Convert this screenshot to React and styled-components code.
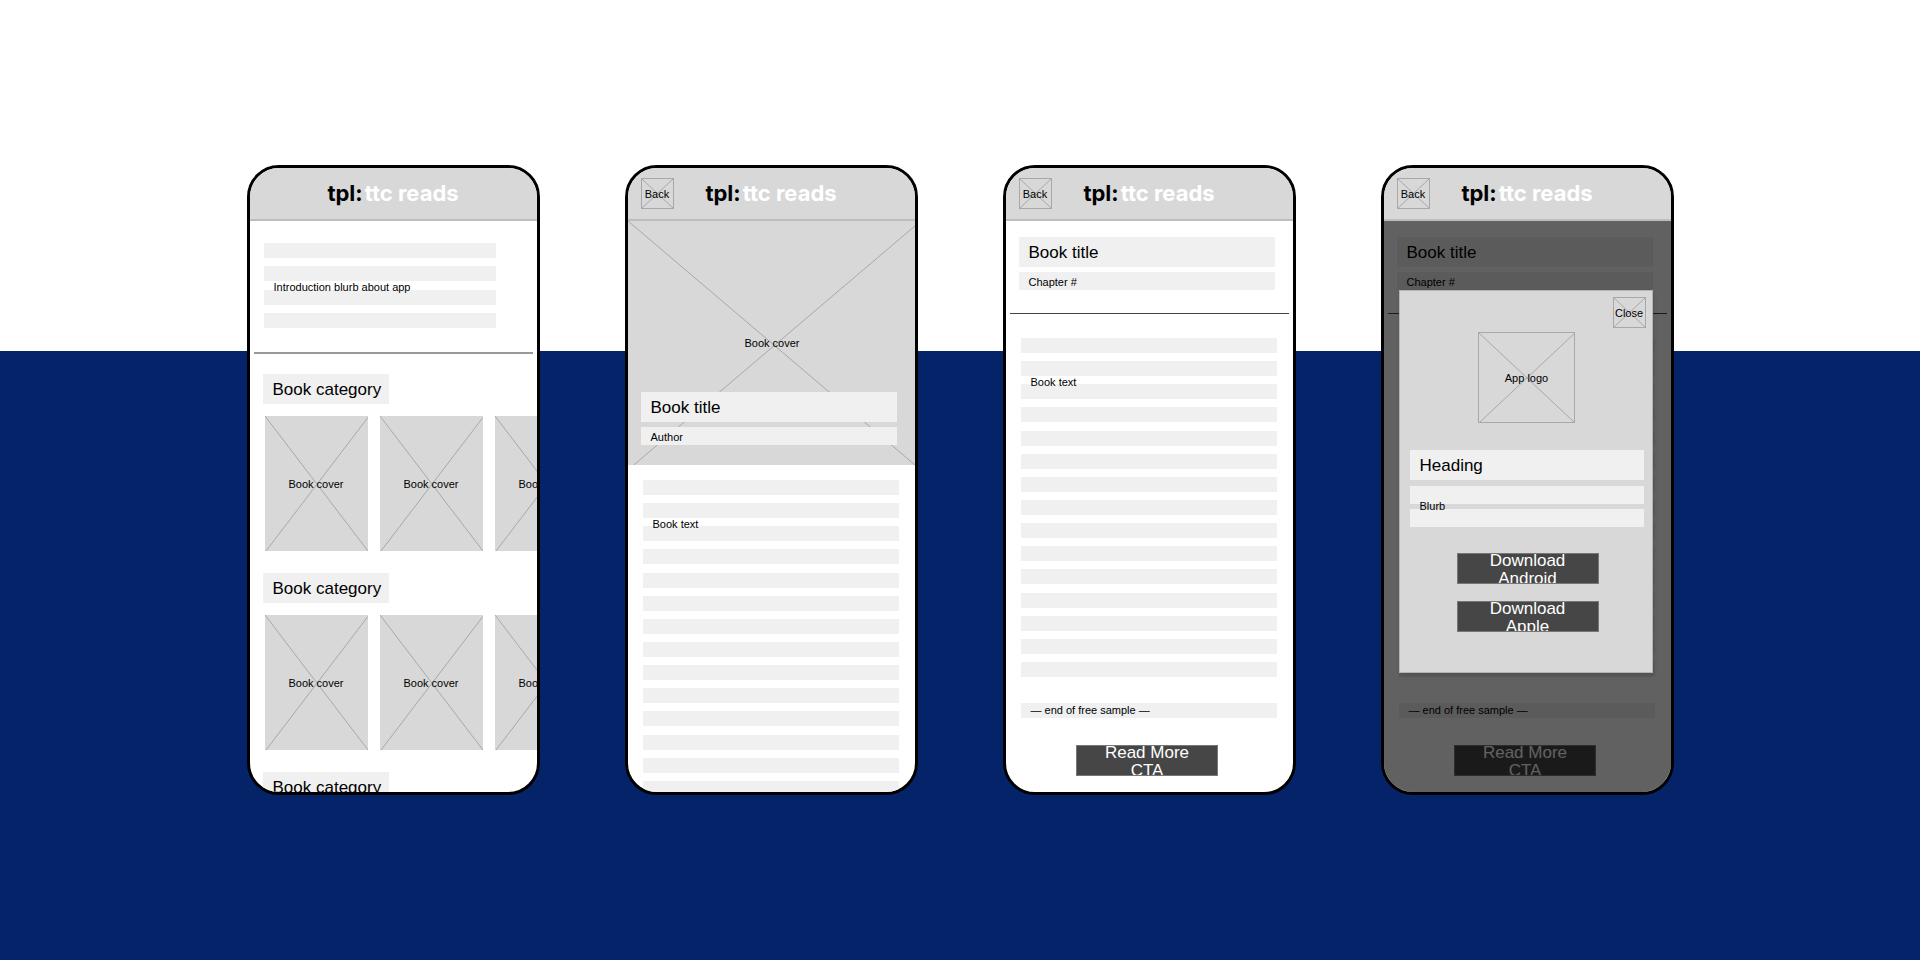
import React from 'react';
import styled, { createGlobalStyle } from 'styled-components';

const App = () => {
  return (
    <>
      <GlobalStyle />
      <Showcase>
        <Phone>
          <TopBar />
          <HomeScreen />
        </Phone>
        <Phone>
          <TopBar back />
          <BookScreen />
        </Phone>
        <Phone>
          <TopBar back />
          <Screen>
            <ChapterContent />
          </Screen>
        </Phone>
        <Phone>
          <TopBar back />
          <Screen>
            <ChapterContent />
            <DownloadModal />
          </Screen>
        </Phone>
      </Showcase>
    </>
  )
}

const TopBar = ({ back }) => {
  return (
    <Header>
      {back && (
        <IconButton type="button">
          <Cross />
          <span>Back</span>
        </IconButton>
      )}
      <Logo><strong>tpl:</strong>ttc reads</Logo>
    </Header>
  )
}

const Cross = ({ inset = '0%' }) => {
  return (
    <CrossLines aria-hidden="true">
      <line x1="0%" y1="0%" x2="100%" y2="100%" />
      <line x1={inset} y1="100%" x2="100%" y2={inset} />
    </CrossLines>
  )
}

const TextBlock = ({ lines, label, height, lineHeight = 15, labelTop = 36 }) => {
  return (
    <Block $height={height}>
      <Lines>
        {Array.from({ length: lines }, (_, i) => (
          <Line key={i} $height={lineHeight} />
        ))}
      </Lines>
      <BlockLabel $top={labelTop}>{label}</BlockLabel>
    </Block>
  )
}

const HomeScreen = () => {
  const categories = [1, 2, 3];
  const books = [1, 2, 3];

  return (
    <Screen>
      <Intro>
        <TextBlock lines={4} height={85} label="Introduction blurb about app" />
      </Intro>
      <Rule $thick />
      <Categories>
        {categories.map(category => (
          <section key={category}>
            <CategoryTitle>Book category</CategoryTitle>
            <Shelf>
              {books.map(book => (
                <Cover key={book}>
                  <Cross inset="1%" />
                  <span>Book cover</span>
                </Cover>
              ))}
            </Shelf>
          </section>
        ))}
      </Categories>
    </Screen>
  )
}

const BookScreen = () => {
  return (
    <Screen>
      <Hero>
        <Cross inset="2%" />
        <HeroLabel>Book cover</HeroLabel>
        <Titles>
          <Title>Book title</Title>
          <Subtitle>Author</Subtitle>
        </Titles>
      </Hero>
      <BookText>
        <TextBlock lines={14} height={316} label="Book text" />
      </BookText>
    </Screen>
  )
}

const ChapterContent = () => {
  return (
    <>
      <ChapterTitles>
        <Title>Book title</Title>
        <Subtitle>Chapter #</Subtitle>
      </ChapterTitles>
      <Rule />
      <ChapterText>
        <TextBlock lines={15} height={339} label="Book text" />
        <SampleEnd>— end of free sample —</SampleEnd>
      </ChapterText>
      <Actions>
        <Button type="button"><span>Read More CTA</span></Button>
      </Actions>
    </>
  )
}

const DownloadModal = () => {
  return (
    <Overlay>
      <Modal role="dialog" aria-label="Heading">
        <CloseRow>
          <IconButton type="button">
            <Cross />
            <span>Close</span>
          </IconButton>
        </CloseRow>
        <AppLogo>
          <Cross inset="1%" />
          <span>App logo</span>
        </AppLogo>
        <ModalText>
          <Title>Heading</Title>
          <TextBlock lines={2} height={41} lineHeight={18} labelTop={12} label="Blurb" />
        </ModalText>
        <ModalActions>
          <Button type="button"><span>Download Android</span></Button>
          <Button type="button"><span>Download Apple</span></Button>
        </ModalActions>
      </Modal>
    </Overlay>
  )
}

const GlobalStyle = createGlobalStyle`
  * {
    box-sizing: border-box;
  }
  body {
    margin: 0;
    font-family: "Liberation Sans", Arial, sans-serif;
    font-size: 11px;
    line-height: 16px;
    color: #000;
  }
  h2, h3, p {
    margin: 0;
    font-weight: 400;
  }
`

const Showcase = styled.main`
  min-height: 100vh;
  padding: 40px;
  display: flex;
  flex-wrap: wrap;
  align-items: center;
  justify-content: center;
  gap: 85px;
  background: linear-gradient(#fff 36.6%, #052369 36.6%);
`

const Phone = styled.article`
  flex: 0 1 293px;
  height: 630px;
  display: flex;
  flex-direction: column;
  border: 3px solid #000;
  border-radius: 32px;
  background: #fff;
  overflow: hidden;
`

const Header = styled.header`
  flex: none;
  display: grid;
  grid-template-columns: 33px 1fr 33px;
  align-items: center;
  height: 53px;
  padding: 0 13px;
  background: #d8d8d8;
  border-bottom: 2px solid #bdbdbd;
`

const Logo = styled.h2`
  grid-column: 2;
  padding-bottom: 2px;
  text-align: center;
  white-space: nowrap;
  font-family: Inter, sans-serif;
  font-size: 22px;
  line-height: 26px;
  font-weight: 700;
  color: #fff;
  strong {
    margin-right: 2px;
    font-weight: 700;
    color: #000;
  }
`

const CrossLines = styled.svg`
  width: 100%;
  height: 100%;
  min-width: 0;
  min-height: 0;
  stroke: #a8a8a8;
  stroke-width: 1;
`

/* the crossed box and its label share one grid cell */
const Crossed = styled.div`
  display: grid;
  grid-template: 100% / 100%;
  place-items: center;
  > * {
    grid-area: 1 / 1;
  }
`

const IconButton = styled(Crossed).attrs({ as: 'button' })`
  width: 33px;
  height: 31px;
  padding: 0;
  border: 1px solid #a8a8a8;
  background: none;
  font: inherit;
  color: inherit;
  cursor: pointer;
`

const Screen = styled.div`
  flex: 1;
  min-height: 0;
  position: relative;
  overflow: hidden;
`

const Intro = styled.div`
  padding: 22px 41px 24px 14px;
`

const Block = styled.div`
  display: grid;
  height: ${props => props.$height}px;
  > * {
    grid-area: 1 / 1;
  }
`

const Lines = styled.div`
  display: flex;
  flex-direction: column;
  justify-content: space-between;
`

const Line = styled.div`
  height: ${props => props.$height}px;
  background: #f0f0f0;
`

const BlockLabel = styled.p`
  padding: ${props => props.$top}px 10px 0;
`

const Rule = styled.hr`
  height: ${props => props.$thick ? '2px' : '1px'};
  margin: 0 4px;
  border: 0;
  background: ${props => props.$thick ? '#999' : '#444'};
`

const Categories = styled.div`
  display: flex;
  flex-direction: column;
  gap: 22px;
  padding: 20px 0 0 13px;
`

const Title = styled.h3`
  padding: 2px 8px 0 10px;
  font-size: 17px;
  line-height: 28px;
  background: #f0f0f0;
`

const CategoryTitle = styled(Title)`
  width: fit-content;
`

const Shelf = styled.div`
  display: flex;
  gap: 12px;
  padding: 12px 0 0 2px;
`

const Cover = styled(Crossed)`
  flex: none;
  width: 103px;
  height: 135px;
  background: #d8d8d8;
`

const Hero = styled(Crossed)`
  height: 244px;
  background: #d8d8d8;
`

const HeroLabel = styled.span`
  padding-left: 2px;
`

const Titles = styled.div`
  align-self: end;
  justify-self: stretch;
  display: flex;
  flex-direction: column;
  gap: 5px;
  padding: 0 18px 20px 13px;
`

const Subtitle = styled.p`
  padding: 2px 10px 0;
  line-height: 16px;
  background: #f0f0f0;
`

const BookText = styled.div`
  padding: 15px 16px 0 15px;
`

const ChapterTitles = styled(Titles)`
  padding: 16px 18px 23px 13px;
`

const ChapterText = styled.div`
  display: flex;
  flex-direction: column;
  gap: 26px;
  padding: 24px 16px 27px 15px;
`

const SampleEnd = styled.p`
  padding: 0 10px;
  line-height: 15px;
  background: #f0f0f0;
`

const Actions = styled.div`
  display: flex;
  justify-content: center;
  padding-right: 4px;
`

const Button = styled.button`
  display: flex;
  align-items: flex-start;
  justify-content: center;
  width: 142px;
  height: 31px;
  padding: 0 20px;
  border: 1px solid #777;
  background: #464646;
  color: #fff;
  font-family: inherit;
  font-size: 17px;
  line-height: 18px;
  text-align: center;
  overflow: hidden;
  cursor: pointer;
  span {
    margin-top: -2px;
  }
`

const Overlay = styled.div`
  position: absolute;
  inset: 0;
  padding: 69px 18px 0 15px;
  background: rgba(0, 0, 0, .62);
`

const Modal = styled.div`
  height: 383px;
  display: flex;
  flex-direction: column;
  padding: 6px 6px 0 10px;
  border: 1px solid #b4b4b4;
  background: #d8d8d8;
  box-shadow: 1px 3px 4px rgba(0, 0, 0, .1);
`

const CloseRow = styled.div`
  display: flex;
  justify-content: flex-end;
`

const AppLogo = styled(Crossed)`
  align-self: center;
  width: 97px;
  height: 91px;
  margin: 4px 2px 27px 0;
  border: 1px solid #a8a8a8;
`

const ModalText = styled.div`
  display: flex;
  flex-direction: column;
  gap: 6px;
  padding-right: 2px;
`

const ModalActions = styled.div`
  display: flex;
  flex-direction: column;
  align-items: center;
  gap: 17px;
  padding-top: 26px;
`

export default App
